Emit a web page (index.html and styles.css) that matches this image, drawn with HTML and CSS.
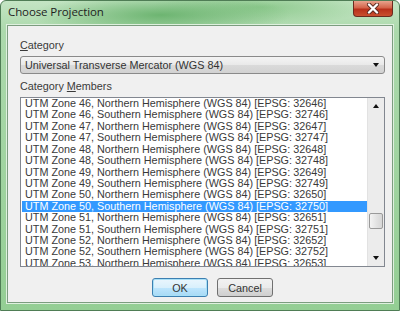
FILE: index.html
```html
<!DOCTYPE html>
<html>
<head>
	<meta charset="UTF-8">
	<title>Choose Projection</title>
	<link rel="stylesheet" href="styles.css">
</head>
<body>

<div id="window">

	<div id="titleBar">
		<span id="caption">Choose Projection</span>
		<div id="closeBtn">
			<svg width="14" height="11" viewBox="0 0 14 11">
				<path d="M3 1.5 L11 9.5 M11 1.5 L3 9.5" stroke="#5a2a20" stroke-width="4" stroke-linecap="round"/>
				<path d="M3 1.5 L11 9.5 M11 1.5 L3 9.5" stroke="#ffffff" stroke-width="2.4" stroke-linecap="round"/>
			</svg>
		</div>
	</div>

	<div id="client">
		<div class="label"><u>C</u>ategory</div>

		<div id="combo">
			<span>Universal Transverse Mercator (WGS 84)</span>
			<span class="arrowDown"></span>
		</div>

		<div class="label">Category <u>M</u>embers</div>

		<div id="listBox">
			<div id="items">
				<div class="item">UTM Zone 46, Northern Hemisphere (WGS 84) [EPSG: 32646]</div>
				<div class="item">UTM Zone 46, Southern Hemisphere (WGS 84) [EPSG: 32746]</div>
				<div class="item">UTM Zone 47, Northern Hemisphere (WGS 84) [EPSG: 32647]</div>
				<div class="item">UTM Zone 47, Southern Hemisphere (WGS 84) [EPSG: 32747]</div>
				<div class="item">UTM Zone 48, Northern Hemisphere (WGS 84) [EPSG: 32648]</div>
				<div class="item">UTM Zone 48, Southern Hemisphere (WGS 84) [EPSG: 32748]</div>
				<div class="item">UTM Zone 49, Northern Hemisphere (WGS 84) [EPSG: 32649]</div>
				<div class="item">UTM Zone 49, Southern Hemisphere (WGS 84) [EPSG: 32749]</div>
				<div class="item">UTM Zone 50, Northern Hemisphere (WGS 84) [EPSG: 32650]</div>
				<div class="item selected">UTM Zone 50, Southern Hemisphere (WGS 84) [EPSG: 32750]</div>
				<div class="item">UTM Zone 51, Northern Hemisphere (WGS 84) [EPSG: 32651]</div>
				<div class="item">UTM Zone 51, Southern Hemisphere (WGS 84) [EPSG: 32751]</div>
				<div class="item">UTM Zone 52, Northern Hemisphere (WGS 84) [EPSG: 32652]</div>
				<div class="item">UTM Zone 52, Southern Hemisphere (WGS 84) [EPSG: 32752]</div>
				<div class="item">UTM Zone 53, Northern Hemisphere (WGS 84) [EPSG: 32653]</div>
			</div>
			<div id="scrollBar">
				<div class="scrollBtn"><span class="arrowUp"></span></div>
				<div id="track">
					<div id="thumb"></div>
				</div>
				<div class="scrollBtn"><span class="arrowDown"></span></div>
			</div>
		</div>

		<div id="buttons">
			<div class="button default">OK</div>
			<div class="button">Cancel</div>
		</div>
	</div>

</div>

</body>
</html>
```

FILE: styles.css
```css
body{
	margin:0;
	background:#ffffff;
	font-family:"Liberation Sans", Arial, sans-serif;
}

#window{
	width:400px;
	height:311px;
	box-sizing:border-box;
	border:1px solid #4f7d55;
	border-radius:6px 6px 0 0;
	background:
		radial-gradient(ellipse 130px 22px at 160px 14px, rgba(90,170,95,0.8), rgba(90,170,95,0) 100%),
		radial-gradient(ellipse 110px 18px at 260px 6px, rgba(110,185,110,0.6), rgba(110,185,110,0) 100%),
		linear-gradient(#c4e5c4, #acd9ac 30px, #94ce94);
	display:flex;
	flex-direction:column;
}

#titleBar{
	height:24px;
	display:flex;
	align-items:flex-start;
	padding-left:7px;
	padding-right:6px;
}

#caption{
	flex:1;
	font-family:"Open Sans", "Noto Sans", sans-serif;
	font-size:11.5px;
	color:#1e1e1e;
	margin-top:3px;
	letter-spacing:-0.1px;
}

#closeBtn{
	width:40px;
	height:16px;
	box-sizing:border-box;
	border:1px solid #6b2a1e;
	border-top:none;
	border-radius:0 0 4px 4px;
	background:linear-gradient(#e8a38d, #d4644a 45%, #b8301a 55%, #c9502f);
	display:flex;
	align-items:center;
	justify-content:center;
}

#client{
	flex:1;
	margin:0 6px 7px 6px;
	border:1px solid #7c9d7f;
	box-shadow:0 0 0 1px #dff0df;
	background:#f0f0f0;
	padding:12px 7px 0 12px;
	display:flex;
	flex-direction:column;
	font-size:10.8px;
	color:#3a3a3a;
}

.label{
	height:13px;
	line-height:13px;
	margin-top:1px;
}

#combo{
	height:18px;
	box-sizing:border-box;
	margin-top:4px;
	margin-bottom:5px;
	border:1px solid #8a8a8a;
	border-radius:3px;
	background:linear-gradient(#f4f4f4, #e9e9e9 50%, #dadada 51%, #d2d2d2);
	display:flex;
	align-items:center;
	justify-content:space-between;
	padding:0 5px 0 4px;
	color:#333333;
}

.arrowDown{
	width:0;
	height:0;
	border-left:3.5px solid transparent;
	border-right:3.5px solid transparent;
	border-top:4px solid #111111;
}

.arrowUp{
	width:0;
	height:0;
	border-left:3.5px solid transparent;
	border-right:3.5px solid transparent;
	border-bottom:4px solid #111111;
}

#listBox{
	height:170px;
	box-sizing:border-box;
	margin-top:4px;
	border:1px solid #828790;
	background:#ffffff;
	display:flex;
}

#items{
	flex:1;
	overflow:hidden;
	padding:0 0 0 1px;
}

.item{
	height:11.43px;
	line-height:11.43px;
	padding-left:3px;
	white-space:nowrap;
	color:#3a3a3a;
}

.selected{
	background:#3399ff;
	color:#ffffff;
}

#scrollBar{
	width:16px;
	display:flex;
	flex-direction:column;
	background:#ececec;
	border-left:1px solid #e2e2e2;
}

.scrollBtn{
	height:16px;
	display:flex;
	align-items:center;
	justify-content:center;
}

#track{
	flex:1;
	position:relative;
}

#thumb{
	position:absolute;
	left:1px;
	right:1px;
	top:99px;
	height:16px;
	box-sizing:border-box;
	border:1px solid #9a9a9a;
	border-radius:2px;
	background:linear-gradient(90deg, #f4f4f4, #e4e4e4 50%, #d6d6d6);
}

#buttons{
	display:flex;
	gap:9px;
	padding-left:132px;
	margin-top:11px;
}

.button{
	width:56px;
	height:19px;
	box-sizing:border-box;
	border:1px solid #707070;
	border-radius:3px;
	background:linear-gradient(#f2f2f2, #ebebeb 50%, #dddddd 51%, #cfcfcf);
	display:flex;
	align-items:center;
	justify-content:center;
	font-size:10.8px;
	color:#333333;
}

.default{
	border-color:#3c7fb1;
	box-shadow:inset 0 0 0 1px #a8e0f7;
	background:linear-gradient(#eaf6fd, #d9f0fc 50%, #bee6fd 51%, #a7d9f5);
}
```
